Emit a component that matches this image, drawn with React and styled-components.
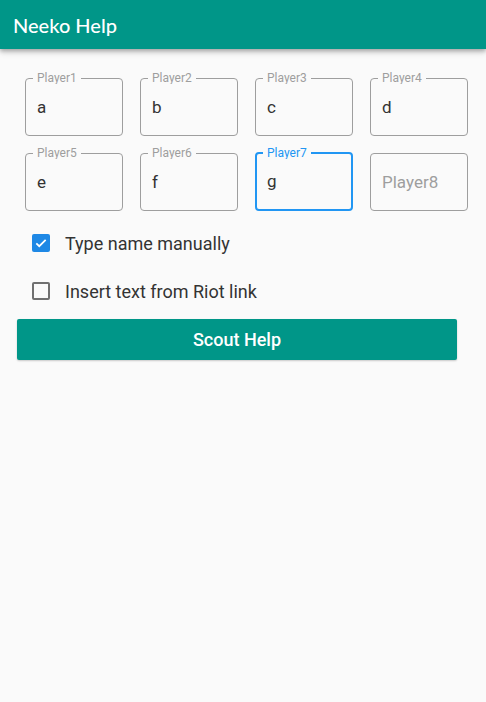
import React, { useState } from 'react';
import styled, { createGlobalStyle } from 'styled-components';

const GlobalStyle = createGlobalStyle`
  html, body {
    margin: 0;
    padding: 0;
    background: #fafafa;
    font-family: Roboto, "Liberation Sans", sans-serif;
  }
`;

const Page = styled.div`
  min-height: 702px;
  background: #fafafa;
`;

const AppBar = styled.header`
  height: 49px;
  background: #009688;
  display: flex;
  align-items: center;
  padding: 0 13px;
  box-shadow: 0 2px 4px rgba(0, 0, 0, 0.25), 0 4px 6px rgba(0, 0, 0, 0.12);
`;

const Title = styled.h1`
  margin: 0;
  font-family: Lato, Roboto, sans-serif;
  font-size: 20px;
  font-weight: 500;
  color: #fff;
`;

const Content = styled.main`
  padding: 23px 29px 0 17px;
`;

const Grid = styled.div`
  display: grid;
  grid-template-columns: repeat(4, 98px);
  column-gap: 17px;
  row-gap: 11px;
  padding-left: 8px;
`;

const Field = styled.fieldset`
  margin: 0;
  height: 64px;
  box-sizing: border-box;
  border: ${(p) => (p.$focused ? '2px solid #2196f3' : '1px solid #9e9e9e')};
  border-radius: 4px;
  padding: 0 ${(p) => (p.$focused ? '10px' : '11px')};
  display: flex;
  align-items: center;
  min-width: 0;
`;

const Legend = styled.legend`
  font-size: 12px;
  line-height: 12px;
  height: 12px;
  color: ${(p) => (p.$focused ? '#2196f3' : '#9e9e9e')};
  padding: ${(p) => (p.$hidden ? '0' : '0 4px')};
  margin-left: ${(p) => (p.$hidden ? '0' : '-4px')};
  max-width: ${(p) => (p.$hidden ? '0.01px' : 'none')};
  overflow: hidden;
  visibility: ${(p) => (p.$hidden ? 'hidden' : 'visible')};
`;

const Value = styled.input`
  border: none;
  outline: none;
  background: transparent;
  width: 100%;
  padding: 0;
  margin-top: -6px;
  font-family: Roboto, sans-serif;
  font-size: 17px;
  color: #333;

  &::placeholder {
    color: #9e9e9e;
  }
`;

const Options = styled.div`
  display: flex;
  flex-direction: column;
  gap: 24px;
  padding: 20px 0 0 15px;
`;

const Option = styled.label`
  display: flex;
  align-items: center;
  gap: 15px;
  font-size: 18px;
  color: #333;
  cursor: pointer;
  height: 24px;
`;

const Box = styled.span`
  width: 18px;
  height: 18px;
  box-sizing: border-box;
  border-radius: 2px;
  display: flex;
  align-items: center;
  justify-content: center;
  background: ${(p) => (p.$checked ? '#1e88e5' : 'transparent')};
  border: ${(p) => (p.$checked ? 'none' : '2px solid #707070')};
`;

const Button = styled.button`
  margin-top: 16px;
  width: 440px;
  height: 41px;
  border: none;
  border-radius: 2px;
  background: #009688;
  color: #fff;
  font-family: Roboto, sans-serif;
  font-size: 18px;
  font-weight: 500;
  cursor: pointer;
  box-shadow: 0 1px 2px rgba(0, 0, 0, 0.2);
`;

const players = [
  { name: 'Player1', value: 'a' },
  { name: 'Player2', value: 'b' },
  { name: 'Player3', value: 'c' },
  { name: 'Player4', value: 'd' },
  { name: 'Player5', value: 'e' },
  { name: 'Player6', value: 'f' },
  { name: 'Player7', value: 'g', focused: true },
  { name: 'Player8', value: '' },
];

const Check = ({ checked }) => (
  <Box $checked={checked}>
    {checked && (
      <svg width="14" height="14" viewBox="0 0 24 24">
        <path d="M4 12.5l5 5L20 6.5" fill="none" stroke="#fff" strokeWidth="3" />
      </svg>
    )}
  </Box>
);

const App = () => {
  const [manual, setManual] = useState(true);
  const [riot, setRiot] = useState(false);

  return (
    <Page>
      <GlobalStyle />
      <AppBar>
        <Title>Neeko Help</Title>
      </AppBar>
      <Content>
        <Grid>
          {players.map((p) => (
            <Field key={p.name} $focused={p.focused}>
              <Legend $focused={p.focused} $hidden={!p.value}>
                {p.name}
              </Legend>
              <Value defaultValue={p.value} placeholder={p.value ? '' : p.name} />
            </Field>
          ))}
        </Grid>
        <Options>
          <Option onClick={() => setManual(!manual)}>
            <Check checked={manual} />
            Type name manually
          </Option>
          <Option onClick={() => setRiot(!riot)}>
            <Check checked={riot} />
            Insert text from Riot link
          </Option>
        </Options>
        <Button>Scout Help</Button>
      </Content>
    </Page>
  );
};

export default App;
